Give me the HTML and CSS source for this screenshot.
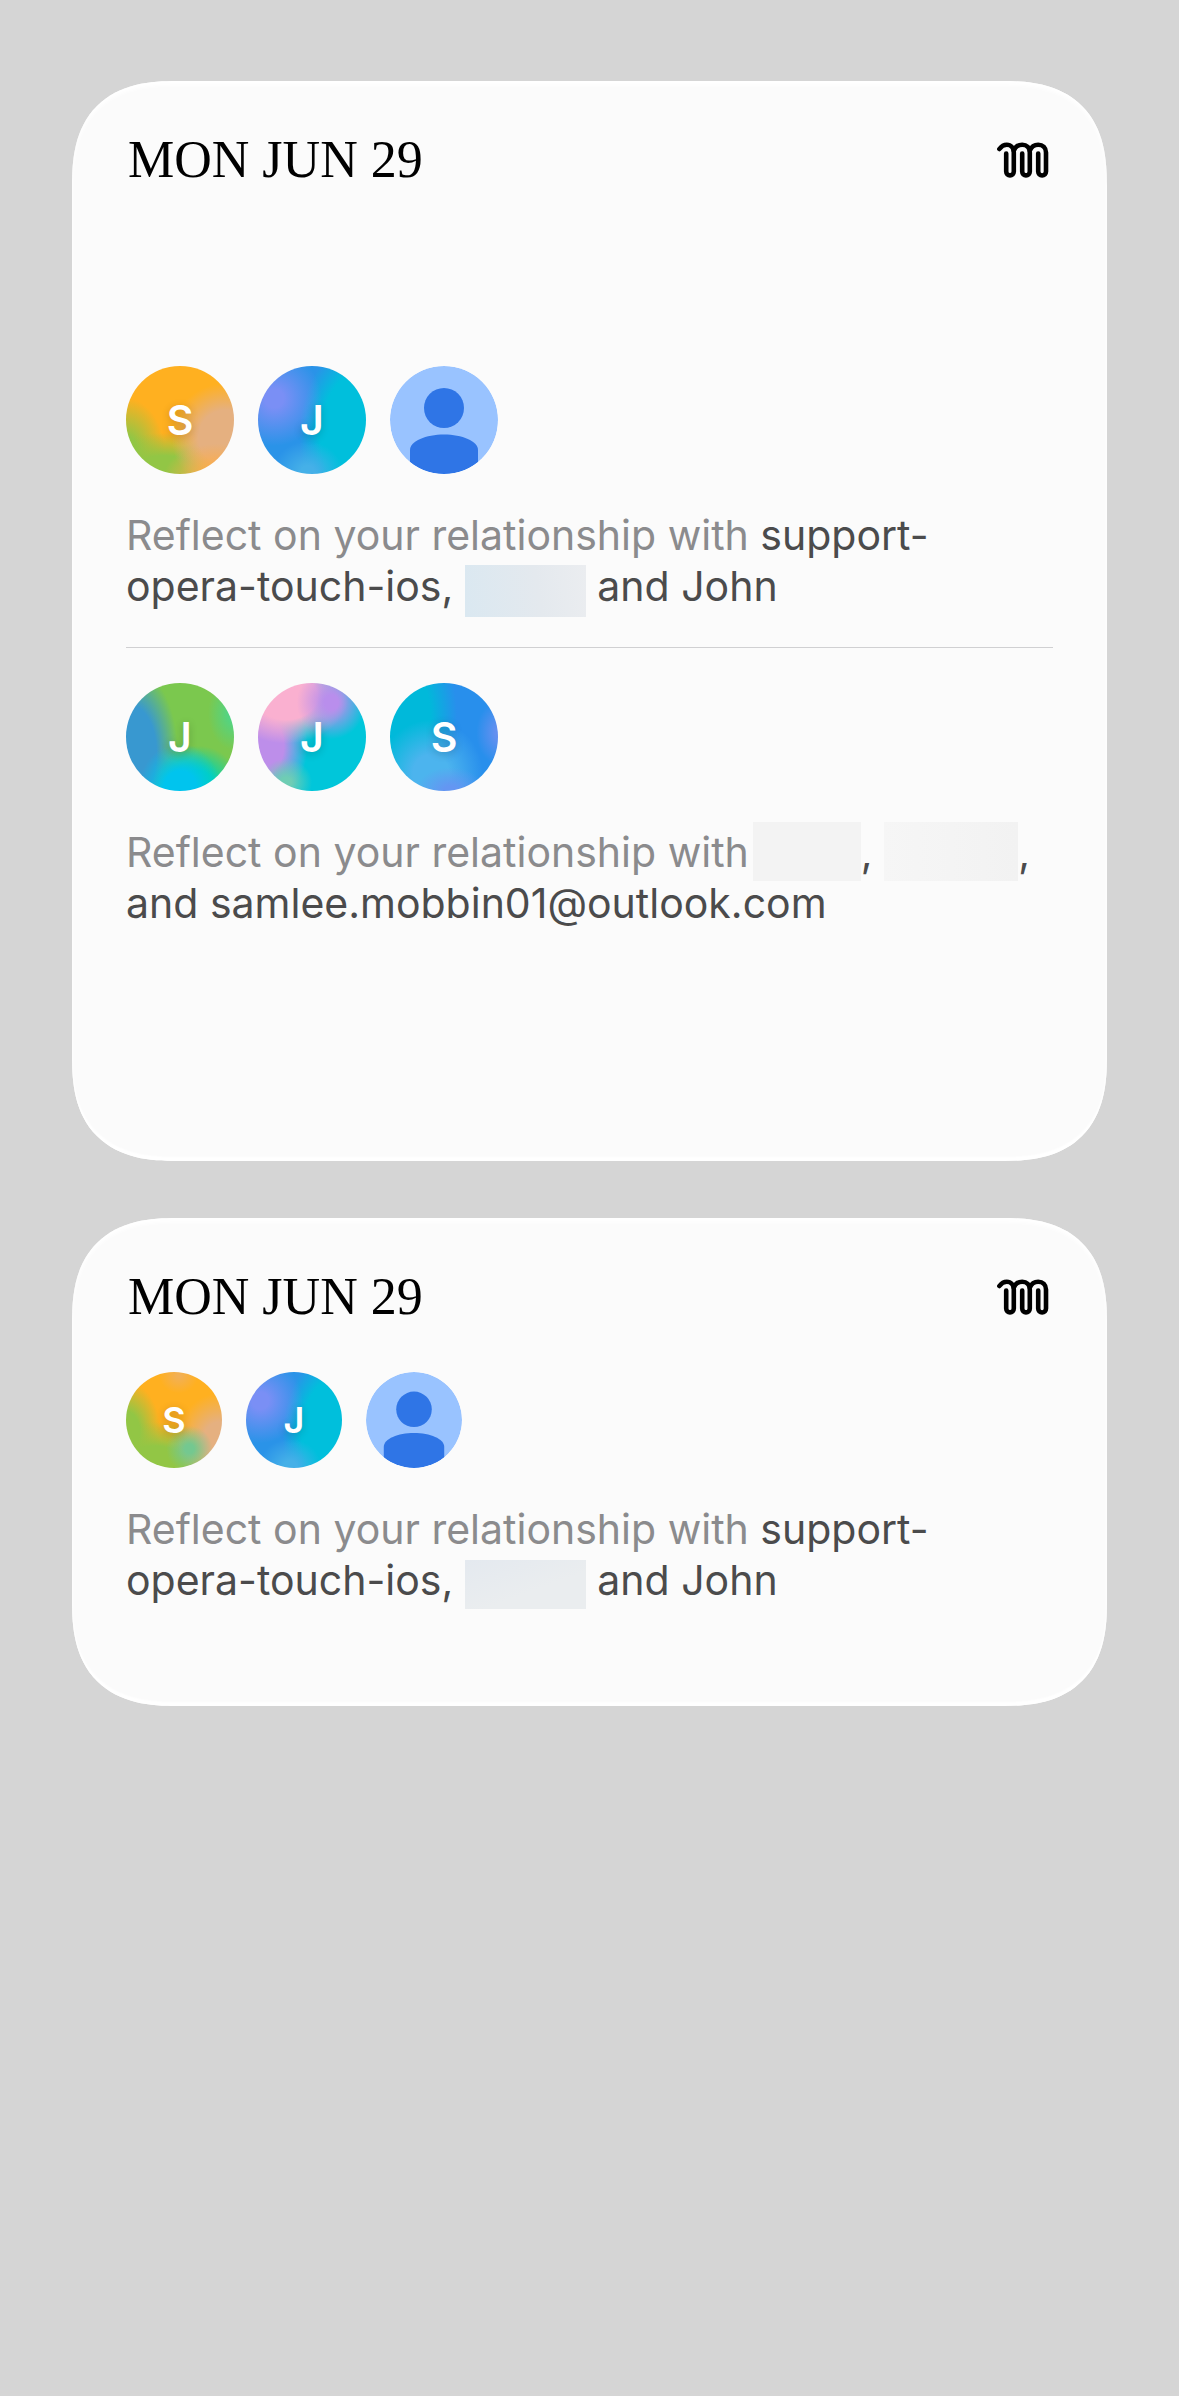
FILE: index.html
```html
<!DOCTYPE html>
<html lang="en">
<head>
<meta charset="utf-8">
<meta name="viewport" content="width=device-width, initial-scale=1">
<title>Reflect widgets</title>
<link rel="stylesheet" href="styles.css">
</head>
<body>
<svg class="defs" aria-hidden="true">
  <symbol id="mark" viewBox="0 0 52 36">
    <g fill="none" stroke="#000" stroke-width="4.6" stroke-linecap="round" stroke-linejoin="round">
      <path d="M2.4 7C4.4 4.2 7 2.7 9.8 2.7C14 2.7 16.8 6 16.8 10.5V29.6a3.8 3.8 0 0 1-7.6 0V11.5"/>
      <path d="M16.8 8.5C18.4 4.8 21.6 2.7 25.2 2.7C29.8 2.7 32.8 6 32.8 10.5V29.6a3.8 3.8 0 0 1-7.6 0V11.5"/>
      <path d="M32.8 8.5C34.4 4.8 37.6 2.7 41.2 2.7C45.8 2.7 49 6 49 10.5V29.6a3.9 3.9 0 0 1-7.8 0V11.5"/>
    </g>
  </symbol>
  <symbol id="person" viewBox="0 0 108 108">
    <clipPath id="disc"><circle cx="54" cy="54" r="54"/></clipPath>
    <g clip-path="url(#disc)">
      <rect width="108" height="108" fill="#99c3ff"/>
      <g fill="#2f75e6">
        <circle cx="54" cy="42" r="20"/>
        <path d="M20 108V84C20 75 36 68.500 54 68.500S88 75 88 84V108Z"/>
      </g>
    </g>
  </symbol>
</svg>
<main class="widgets">
  <article class="widget widget-large">
    <header class="widget-header">
      <h2 class="date">MON JUN 29</h2>
      <svg class="logo" role="img" aria-label="Logo"><use href="#mark"/></svg>
    </header>
    <div class="widget-body">
      <section class="prompt">
        <div class="avatars">
          <span class="avatar sunset">S</span>
          <span class="avatar ocean">J</span>
          <svg class="avatar" aria-hidden="true"><use href="#person"/></svg>
        </div>
        <p class="message">Reflect on your relationship with <strong class="names">support-<br>opera-touch-ios, <span class="redacted blue"></span> and John</strong></p>
      </section>
      <hr class="divider">
      <section class="prompt">
        <div class="avatars">
          <span class="avatar meadow">J</span>
          <span class="avatar orchid">J</span>
          <span class="avatar lagoon">S</span>
        </div>
        <p class="message">Reflect on your relationship with<strong class="names"><span class="redacted first"></span>, <span class="redacted second"></span>, <br>and samlee.mobbin01@outlook.com</strong></p>
      </section>
    </div>
  </article>
  <article class="widget widget-medium">
    <header class="widget-header">
      <h2 class="date">MON JUN 29</h2>
      <svg class="logo" role="img" aria-label="Logo"><use href="#mark"/></svg>
    </header>
    <div class="widget-body">
      <section class="prompt">
        <div class="avatars">
          <span class="avatar sunset mint">S</span>
          <span class="avatar ocean">J</span>
          <svg class="avatar" aria-hidden="true"><use href="#person"/></svg>
        </div>
        <p class="message">Reflect on your relationship with <strong class="names">support-<br>opera-touch-ios, <span class="redacted pale"></span> and John</strong></p>
      </section>
    </div>
  </article>
</main>
</body>
</html>
```

FILE: styles.css
```css
* {
  box-sizing: border-box;
}

body {
  margin: 0;
  min-height: 100vh;
  background: #d5d5d5;
  font-family: Inter, "Liberation Sans", sans-serif;
}

.defs {
  display: block;
  width: 0;
  height: 0;
}

.widgets {
  display: flex;
  flex-direction: column;
  gap: 57px;
  padding: 81px 72px;
}

.widget {
  display: flex;
  flex-direction: column;
  padding: 49px 54px 56px;
  border-radius: 80px;
  background: #fbfbfb;
  box-shadow: inset 0 -4px 2px #fff, inset 0 4px 4px #fff;
}

@supports (corner-shape: superellipse(1.35)) {
  .widget {
    border-radius: 105px;
    corner-shape: superellipse(1.35);
  }
}

.widget-large {
  min-height: 1080px;
}

.widget-medium {
  min-height: 488px;
}

.widget-header {
  display: flex;
  align-items: center;
  justify-content: space-between;
  padding: 0 4px 0 2px;
}

.date {
  margin: 0;
  color: #000;
  font: 400 52px/60px "Liberation Serif", serif;
}

.logo {
  width: 52px;
  height: 36px;
}

.widget-body {
  display: flex;
  flex: 1;
  flex-direction: column;
  justify-content: center;
  gap: 35px;
}

.prompt {
  display: flex;
  flex-direction: column;
  gap: 36px;
}

.avatars {
  display: flex;
  gap: 24px;
}

.avatar {
  display: grid;
  place-items: center;
  width: 108px;
  height: 108px;
  border-radius: 50%;
  color: #fff;
  font-size: 41px;
  font-weight: 600;
  text-shadow: 0 2px 8px rgb(0 0 0 / 20%);
}

.widget-medium .avatar {
  width: 96px;
  height: 96px;
  font-size: 36px;
}

.sunset {
  background:
    radial-gradient(50% 30% at 85% 102%, #fdac48 20%, #fdac4800),
    radial-gradient(50% 50% at 92% 66%, #e5b080 50%, #e5b08000),
    radial-gradient(70% 42% at 35% 104%, #92c645 50%, #92c64500),
    radial-gradient(36% 50% at 0 80%, #92c645 30%, #92c64500),
    #ffb020;
}

.sunset.mint {
  background:
    radial-gradient(24% 24% at 66% 80%, #74c890 20%, #74c89000),
    radial-gradient(45% 50% at 98% 72%, #e5b080 40%, #e5b08000),
    radial-gradient(20% 18% at 55% 4%, #f2b055 10%, #f2b05500),
    radial-gradient(75% 50% at 30% 102%, #92c645 50%, #92c64500),
    radial-gradient(36% 52% at 0 62%, #92c645 40%, #92c64500),
    #ffb020;
}

.ocean {
  background:
    radial-gradient(44% 44% at 15% 30%, #7a8ff5 20%, #7a8ff500),
    radial-gradient(32% 28% at 46% 98%, #45b0e8 20%, #45b0e800),
    radial-gradient(62% 90% at 100% 65%, #00bfdc 68%, #00bfdc00),
    #2a93e8;
}

.meadow {
  background:
    radial-gradient(24% 34% at 100% 28%, #52d484 20%, #52d48400),
    radial-gradient(38% 42% at 50% 98%, #00c4ee 40%, #00c4ee00),
    radial-gradient(40% 38% at 66% 96%, #00d4b0 40%, #00d4b000),
    radial-gradient(44% 80% at 4% 65%, #3898d0 55%, #3898d000),
    #7bc84e;
}

.orchid {
  background:
    radial-gradient(32% 34% at 68% 18%, #b98eec 20%, #b98eec00),
    radial-gradient(58% 44% at 26% 12%, #fab0d0 50%, #fab0d000),
    radial-gradient(24% 22% at 26% 92%, #6fcdb4 20%, #6fcdb400),
    radial-gradient(44% 56% at 2% 58%, #bd8eea 50%, #bd8eea00),
    #00c6da;
}

.lagoon {
  background:
    radial-gradient(22% 30% at 102% 46%, #6490f0 20%, #6490f000),
    radial-gradient(32% 22% at 56% 100%, #6496f2 20%, #6496f200),
    radial-gradient(48% 50% at 38% 84%, #4cb4ee 35%, #4cb4ee00),
    radial-gradient(62% 90% at 0 30%, #00b9da 60%, #00b9da00),
    #288fec;
}

.message {
  margin: 0;
  color: #8b8b8d;
  font-size: 41px;
  line-height: 51px;
}

.names {
  color: #4b4b4c;
  font-weight: 400;
}

.redacted {
  display: inline-block;
  width: 121px;
  height: 52px;
  margin: -10px 0;
  vertical-align: -6px;
}

.blue {
  background: linear-gradient(80deg, #dae8f1, #e4e9ee 60%, #ebedf0);
}

.pale {
  height: 49px;
  vertical-align: -4px;
  background: linear-gradient(160deg, #e4e9ef, #eaedef 60%);
}

.first,
.second {
  height: 59px;
  vertical-align: -4px;
  background: #f3f3f3;
}

.first {
  width: 108px;
  margin-left: 4px;
}

.second {
  width: 134px;
  background: linear-gradient(90deg, #f6f6f6, #f2f2f2);
}

.divider {
  width: 100%;
  height: 1px;
  margin: 0;
  border: 0;
  background: #d0d0d2;
}
```
